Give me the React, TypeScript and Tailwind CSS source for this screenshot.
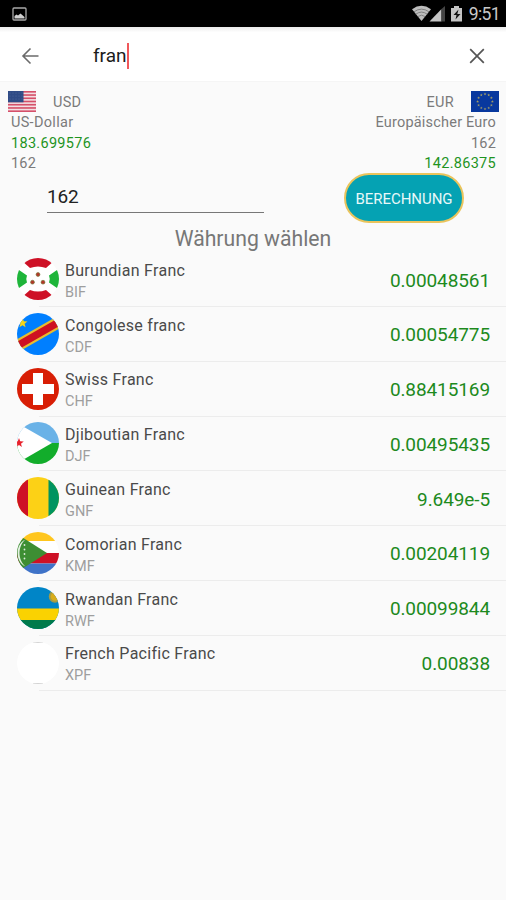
import type { ReactNode } from "react";

type Row = { name: string; code: string; rate: string };

const star = (cx: number, cy: number, r: number) =>
  Array.from({ length: 10 }, (_, i) => {
    const a = (Math.PI / 5) * i - Math.PI / 2;
    const d = i % 2 ? r * 0.42 : r;
    return `${cx + Math.cos(a) * d},${cy + Math.sin(a) * d}`;
  }).join(" ");

const flags: Record<string, ReactNode> = {
  BIF: (
    <>
      <rect width="42" height="42" fill="#fff" />
      <path d="M4 2L13 10Q21 7 29 10L38 2V-2H4ZM4 40L13 32Q21 35 29 32L38 40V44H4Z" fill="#ce1126" />
      <path d="M0 12L2 12L10 17.5Q8.5 21 10 24.5L2 30H0ZM42 12L40 12L32 17.5Q33.5 21 32 24.5L40 30H42Z" fill="#1eb53a" />
      <g fill="#b5342a" stroke="#7a7b3e" strokeWidth="0.7">
        <circle cx="21" cy="16.5" r="1.9" />
        <circle cx="15.5" cy="24.2" r="1.9" />
        <circle cx="26" cy="24.2" r="1.9" />
      </g>
    </>
  ),
  CDF: (
    <>
      <rect width="42" height="42" fill="#007fff" />
      <path d="M-2 27.5L44 1V14.5L-2 41Z" fill="#e8bc2e" />
      <path d="M-2 30L44 3.5V12L-2 38.5Z" fill="#ce1021" />
      <polygon points={star(5.5, 10, 5.2)} fill="#f7d618" />
    </>
  ),
  CHF: (
    <>
      <rect width="42" height="42" fill="#d81e05" />
      <path d="M16 5h10v11h11v10H26v11H16V26H5V16h11Z" fill="#fff" />
    </>
  ),
  DJF: (
    <>
      <rect width="42" height="21" fill="#6ab2e7" />
      <rect y="21" width="42" height="21" fill="#12ad2b" />
      <path d="M-5 -2L35 21L-5 44Z" fill="#fff" />
      <polygon points={star(2, 21, 5)} fill="#e8222d" />
    </>
  ),
  GNF: (
    <>
      <rect width="42" height="42" fill="#fcd116" />
      <rect width="11" height="42" fill="#ce1126" />
      <rect x="31.5" width="11" height="42" fill="#009460" />
    </>
  ),
  KMF: (
    <>
      <rect width="42" height="42" fill="#fff" />
      <rect width="42" height="9" fill="#ffc61e" />
      <rect y="21" width="42" height="10.5" fill="#ce1126" />
      <rect y="31.5" width="42" height="11" fill="#3f73c8" />
      <path d="M-3 0L30 21L-3 42Z" fill="#3d8e33" />
      <path d="M8.5 7.5C-2 12 -2 30 8.5 34.5C0.5 28 0.5 14 8.5 7.5Z" fill="#e4f0e2" />
      <g fill="#dcebda">
        <circle cx="7.5" cy="13" r="0.9" />
        <circle cx="7.5" cy="17.5" r="0.9" />
        <circle cx="7.5" cy="22" r="0.9" />
        <circle cx="7.5" cy="26.5" r="0.9" />
      </g>
    </>
  ),
  RWF: (
    <>
      <rect width="42" height="42" fill="#0085c7" />
      <rect y="21.5" width="42" height="11.5" fill="#fad201" />
      <rect y="33" width="42" height="10" fill="#007a4b" />
      <circle cx="38" cy="9.5" r="6.2" fill="#a39b45" />
      <circle cx="38" cy="9.5" r="4.3" fill="#d9ad1c" />
    </>
  ),
  XPF: (
    <>
      <rect width="42" height="42" fill="#fff" />
      <path d="M16 0.5h10M16 41.5h10" stroke="#d4d4d4" strokeWidth="1" />
    </>
  ),
};

const rows: Row[] = [
  { name: "Burundian Franc", code: "BIF", rate: "0.00048561" },
  { name: "Congolese franc", code: "CDF", rate: "0.00054775" },
  { name: "Swiss Franc", code: "CHF", rate: "0.88415169" },
  { name: "Djiboutian Franc", code: "DJF", rate: "0.00495435" },
  { name: "Guinean Franc", code: "GNF", rate: "9.649e-5" },
  { name: "Comorian Franc", code: "KMF", rate: "0.00204119" },
  { name: "Rwandan Franc", code: "RWF", rate: "0.00099844" },
  { name: "French Pacific Franc", code: "XPF", rate: "0.00838" },
];

function StatusBar() {
  return (
    <header className="flex h-[27px] shrink-0 items-center bg-black pl-[12px] pr-[6px]">
      <svg width="15" height="14" viewBox="0 0 15 14">
        <rect x="1" y="1" width="13" height="12" rx="1" fill="none" stroke="#a8a8a8" strokeWidth="1.3" />
        <path d="M2.5 11.5V9L4.5 7.5L6 8.5L8.5 6.5L12.5 10V11.5Z" fill="#d0d0d0" />
      </svg>
      <div className="ml-auto flex items-center">
        <svg width="52" height="17" viewBox="0 0 52 17">
          <path d="M0 4.2Q9.5 -2.5 19 4.2L9.5 16Z" fill="#bdbdbd" />
          <path d="M2 6.8Q9.5 1.5 17 6.8M3.8 9.2Q9.5 5 15.2 9.2M5.8 11.6Q9.5 8.8 13.2 11.6" fill="none" stroke="#707070" strokeWidth="0.8" />
          <path d="M17.5 16.5L29.5 4V16.5Z" fill="#c4c4c4" />
          <path d="M29.5 4L33 1V16.5H29.5Z" fill="#444" />
          <path d="M39 3H42V1H47V3H50V16.5H39Z" fill="#c4c4c4" />
          <path d="M46.5 4.5L41.5 10H44.5L43.5 14.5L48.5 9H45.3Z" fill="#111" />
        </svg>
        <span className="ml-[5px] pt-px text-[17.5px] leading-[27px] tracking-[-0.6px] text-[#c8c8c8]">9:51</span>
      </div>
    </header>
  );
}

function SearchBar() {
  return (
    <div className="flex h-[55px] shrink-0 items-center border-b border-[#f5f5f5] bg-linear-to-b from-[#ececec] via-white via-10% to-white pl-[21px] pr-[20px] pt-[4px]">
      <svg width="18" height="18" viewBox="0 0 18 18" fill="none" stroke="#6b6b6b" strokeWidth="1.6">
        <path d="M17.5 9H2M9.5 1.5L2 9L9.5 16.5" />
      </svg>
      <div className="ml-[54px] flex items-center">
        <span className="text-[19px] leading-[26px] text-[#1c1c1c]">fran</span>
        <span className="h-[26px] w-[2px] bg-[#f0585a]" />
      </div>
      <svg className="ml-auto" width="18" height="18" viewBox="0 0 18 18" fill="none" stroke="#555" strokeWidth="1.7">
        <path d="M2.2 2.2L15.8 15.8M15.8 2.2L2.2 15.8" />
      </svg>
    </div>
  );
}

function UsFlag() {
  return (
    <svg width="28" height="21" viewBox="0 0 28 21">
      <rect width="28" height="21" fill="#f3dfe3" />
      {[0, 1, 2, 3, 4, 5, 6].map((i) => (
        <rect key={i} y={i * 3.23} width="28" height="1.62" fill="#d5506a" />
      ))}
      <rect width="15.5" height="11.3" fill="#2f4b86" />
      <g fill="#6f83ae">
        {[2, 5, 8].map((y) => [2, 5, 8, 11, 14].map((x) => <circle key={`${x}-${y}`} cx={x} cy={y} r="0.45" />))}
      </g>
    </svg>
  );
}

function EuFlag() {
  return (
    <svg width="28" height="21" viewBox="0 0 28 21">
      <rect width="28" height="21" fill="#08389e" />
      {Array.from({ length: 12 }, (_, i) => (
        <polygon
          key={i}
          points={star(14 + Math.cos((i * Math.PI) / 6) * 7.4, 10.5 + Math.sin((i * Math.PI) / 6) * 7.4, 1.5)}
          fill="#a09c68"
        />
      ))}
    </svg>
  );
}

function Summary() {
  return (
    <section className="flex h-[91px] shrink-0 justify-between pl-[8px] pr-[7px] pt-[8.5px] text-[14.5px] leading-[20.4px] text-[#7b7b7b]">
      <div className="flex flex-col">
        <div className="flex h-[24.4px] items-start">
          <UsFlag />
          <span className="ml-[17px] pt-[2.5px] tracking-[0.3px]">USD</span>
        </div>
        <div className="flex flex-col pl-[3px]">
          <span className="tracking-[0.3px]">US-Dollar</span>
          <span className="tracking-[0.3px] text-[#1f941f]">183.699576</span>
          <span className="tracking-[0.2px]">162</span>
        </div>
      </div>
      <div className="flex flex-col items-end">
        <div className="flex h-[24.4px] items-start">
          <span className="mr-[17px] pt-[2.5px] tracking-[0.3px]">EUR</span>
          <EuFlag />
        </div>
        <div className="flex flex-col items-end pr-[3px]">
          <span className="tracking-[0.2px]">Europäischer Euro</span>
          <span className="tracking-[0.2px]">162</span>
          <span className="tracking-[0.3px] text-[#1f941f]">142.86375</span>
        </div>
      </div>
    </section>
  );
}

function FlagIcon({ code, children }: { code: string; children: ReactNode }) {
  return (
    <svg className="shrink-0" width="42" height="42" viewBox="0 0 42 42">
      <defs>
        <clipPath id={`flag-${code}`}>
          <circle cx="21" cy="21" r="21" />
        </clipPath>
      </defs>
      <g clipPath={`url(#flag-${code})`}>{children}</g>
    </svg>
  );
}

export default function App() {
  return (
    <main className="flex h-[900px] w-[506px] flex-col overflow-hidden bg-[#fafafa] font-[Roboto,sans-serif]">
      <StatusBar />
      <SearchBar />
      <Summary />
      <section className="flex h-[51px] shrink-0 items-start pl-[47px] pr-[42px]">
        <div className="flex h-[40px] w-[217px] items-center border-b border-[#777] pt-[9px] text-[19px] tracking-[-0.2px] text-[#222]">162</div>
        <button className="ml-auto h-[50px] w-[120px] rounded-full border-2 border-[#eac45c] bg-[#05a2b3] pt-[2px] text-[15px] leading-none tracking-[-0.05px] text-[#e8f8f9]">
          BERECHNUNG
        </button>
      </section>
      <h1 className="h-[28.5px] shrink-0 text-center text-[21.2px] leading-[29px] text-[#777]">Währung wählen</h1>
      <ul className="flex flex-col">
        {rows.map((row) => (
          <li key={row.code} className="flex h-[54.8px] shrink-0 pl-[17px]">
            <div className="flex grow bg-[linear-gradient(#ececec,#ececec)] bg-[length:calc(100%-22px)_1.3px] bg-right-bottom bg-no-repeat pr-[16px]">
              <div className="pt-[5.5px]">
                <FlagIcon code={row.code}>{flags[row.code]}</FlagIcon>
              </div>
              <div className="ml-[6px] flex flex-col pt-[7.4px]">
                <span className="text-[16px] leading-[21px] tracking-[0.28px] text-[#4a4a4a]">{row.name}</span>
                <span className="text-[14.5px] leading-[23px] text-[#9e9e9e]">{row.code}</span>
              </div>
              <span className="ml-auto pt-[15px] text-[19px] leading-[26px] tracking-[-0.1px] text-[#1d8a1d]">{row.rate}</span>
            </div>
          </li>
        ))}
      </ul>
    </main>
  );
}
